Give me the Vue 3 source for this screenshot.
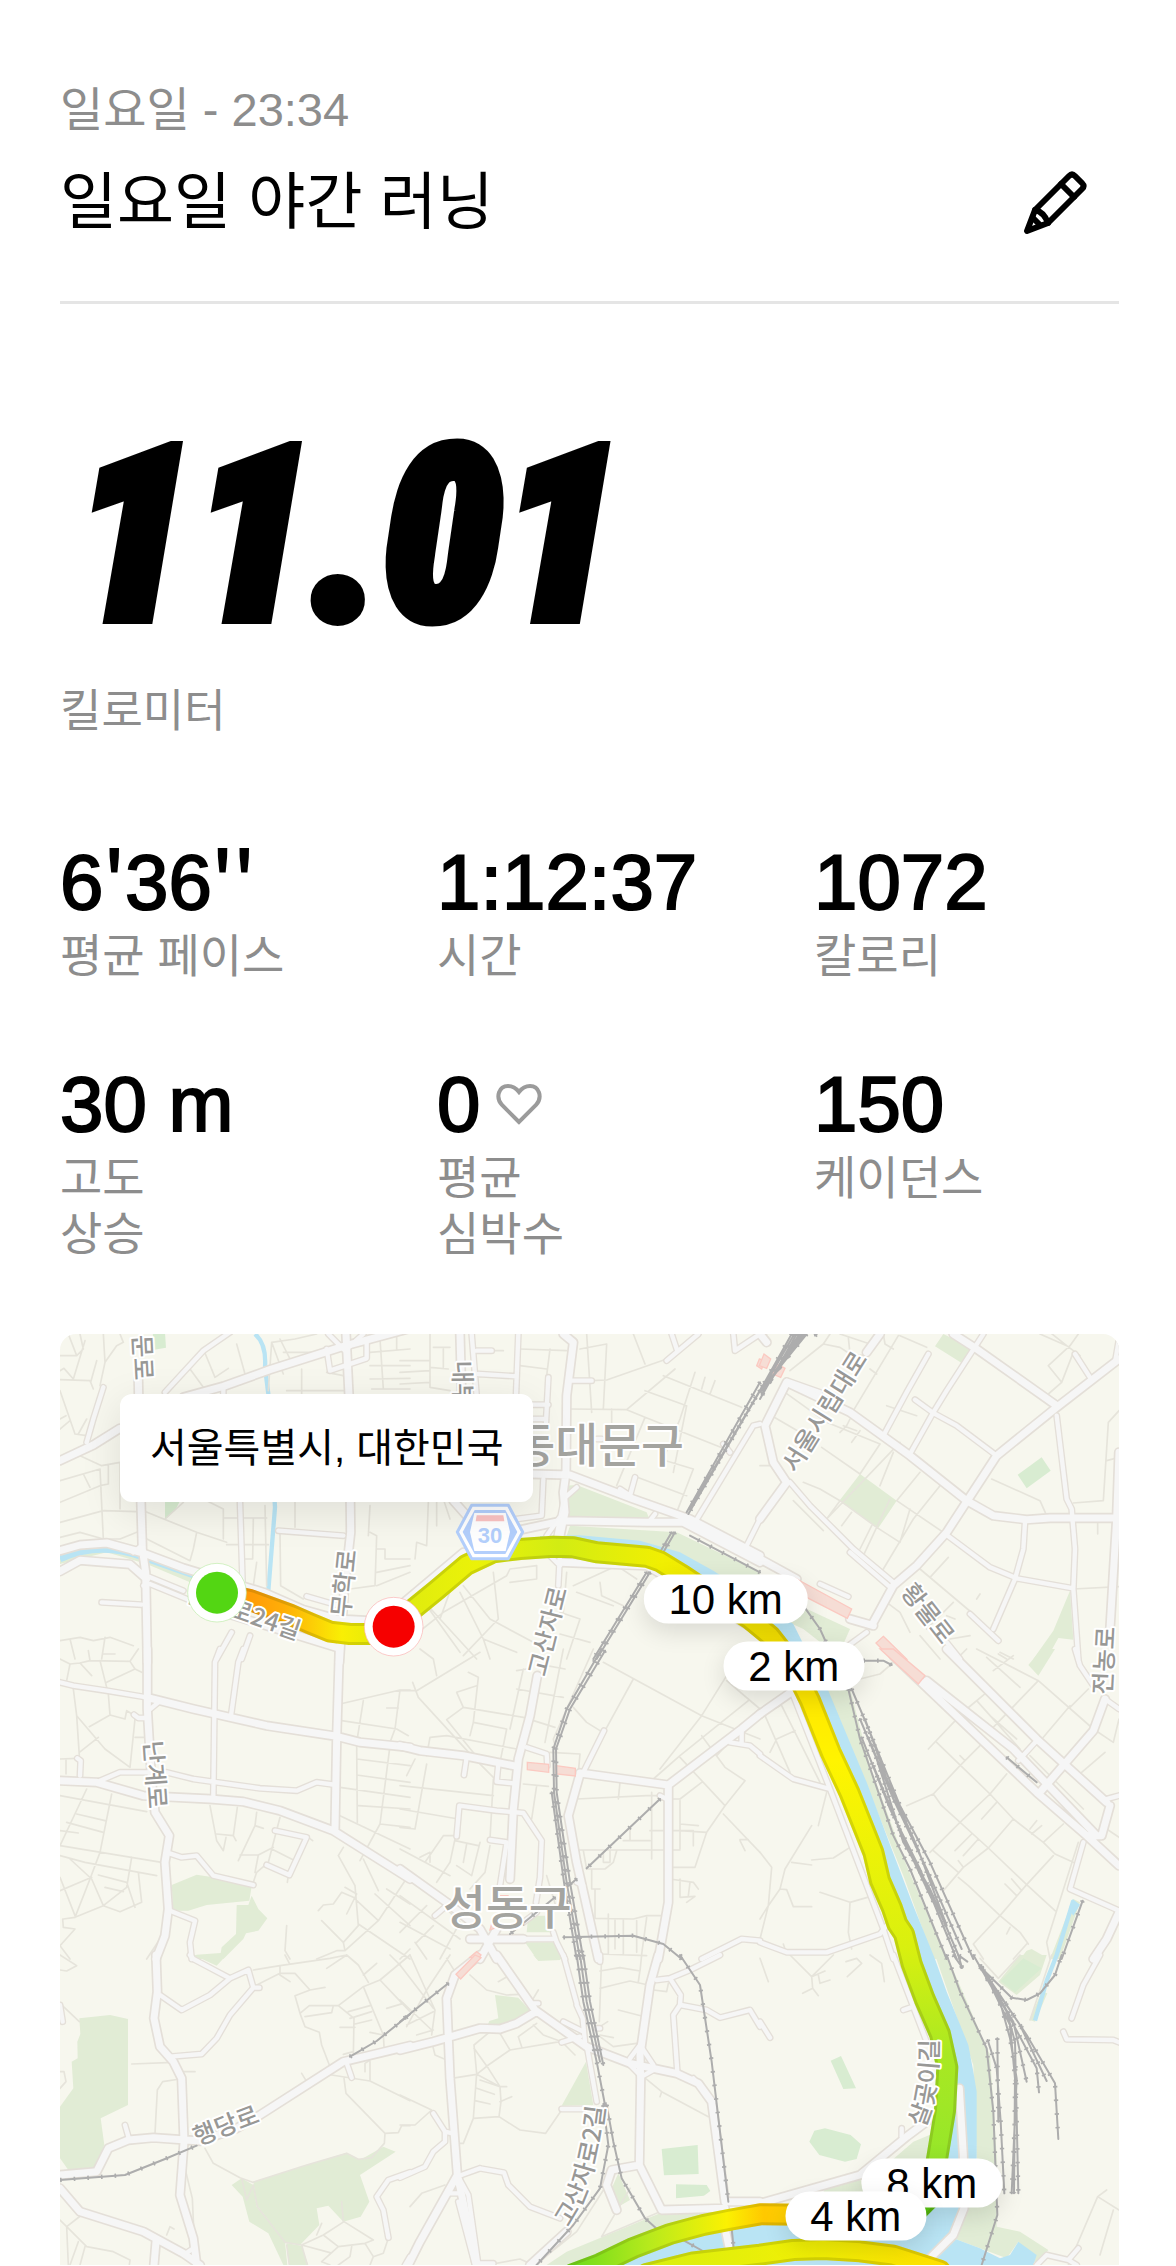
<template>
    <main class="run">
        <header class="run-header">
            <p class="run-date">일요일 - 23:34</p>
            <div class="title-row">
                <h1>일요일 야간 러닝</h1>
                <button class="edit-button" type="button" aria-label="이름 편집">
                    <svg viewBox="0 0 64 64" fill="none" stroke="currentColor" stroke-width="6" stroke-linejoin="round" stroke-linecap="round">
                        <path d="M4 60 L12 39 L46 5 Q49 2 52 5 L59 12 Q62 15 59 18 L25 52 Z" />
                        <path d="M38 13 L51 26 M12 39 Q21 41 25 52 M10 47 L17 54" />
                    </svg>
                </button>
            </div>
        </header>

        <section class="distance">
            <p class="distance-value">11.01</p>
            <p class="distance-unit">킬로미터</p>
        </section>

        <dl class="stats">
            <div v-for="stat in stats" :key="stat.label" class="stat">
                <dd>
                    <span><span v-for="(part, i) in stat.value.split(/(')/)" :key="i" :class="{ tick: part === `'` }">{{ part }}</span></span>
                    <svg v-if="stat.heart" class="heart" viewBox="0 0 46 42" fill="none" stroke="currentColor" stroke-width="4">
                        <path d="M23 39 L6 22 C-1 14 3 3 12 3 C17 3 20 5 23 9 C26 5 29 3 34 3 C43 3 47 14 40 22 Z" />
                    </svg>
                </dd>
                <dt class="label">{{ stat.label }}</dt>
            </div>
        </dl>

        <section class="map">
            <svg class="map-canvas" viewBox="0 0 3177 2793" role="img" aria-label="러닝 경로">
                <defs>
                    <linearGradient id="leg0" gradientUnits="userSpaceOnUse" x1="560" y1="0" x2="1000" y2="0">
                        <stop offset="0" stop-color="#ff9a08" />
                        <stop offset=".25" stop-color="#ffae08" />
                        <stop offset=".65" stop-color="#f9ef04" />
                        <stop offset="1" stop-color="#dce90c" />
                    </linearGradient>
                    <linearGradient id="leg1" gradientUnits="userSpaceOnUse" x1="1000" y1="0" x2="2240" y2="0">
                        <stop offset="0" stop-color="#ddea10" />
                        <stop offset=".2" stop-color="#ebf208" />
                        <stop offset=".4" stop-color="#d2ec13" />
                        <stop offset=".65" stop-color="#f1ef02" />
                        <stop offset="1" stop-color="#f5dc00" />
                    </linearGradient>
                    <linearGradient id="leg2" gradientUnits="userSpaceOnUse" x1="0" y1="1040" x2="0" y2="2640">
                        <stop offset="0" stop-color="#ffe500" />
                        <stop offset=".15" stop-color="#fff400" />
                        <stop offset=".5" stop-color="#d9f00f" />
                        <stop offset=".7" stop-color="#a9e822" />
                        <stop offset=".9" stop-color="#96e62a" />
                        <stop offset="1" stop-color="#55cc10" />
                    </linearGradient>
                    <linearGradient id="leg3" gradientUnits="userSpaceOnUse" x1="1550" y1="0" x2="2300" y2="0">
                        <stop offset="0" stop-color="#72dc1c" />
                        <stop offset=".3" stop-color="#b9ea1c" />
                        <stop offset=".6" stop-color="#fbf102" />
                        <stop offset=".75" stop-color="#ffc800" />
                        <stop offset="1" stop-color="#ffdd00" />
                    </linearGradient>
                    <linearGradient id="leg4" gradientUnits="userSpaceOnUse" x1="1750" y1="0" x2="2650" y2="0">
                        <stop offset="0" stop-color="#d8ee10" />
                        <stop offset=".6" stop-color="#f3f004" />
                        <stop offset="1" stop-color="#ffe000" />
                    </linearGradient>
                    <path id="curve-gosan" d="M1524 2680 Q1615 2560 1640 2260" />
                    <path id="curve-salgot" d="M2592 2382 Q2640 2290 2634 2090" />
                </defs>

                <rect width="3177" height="2793" fill="#f7f7ee" />

                <g v-for="(tile, i) in tiles" :key="'area' + i" :transform="shift(tile)">
                    <path :d="tile.green" fill="#e1ecd5" />
                    <path :d="tile.park" fill="#d8ecd1" />
                </g>
                <path :d="river" fill="#b9e4f4" />
                <g fill="none" stroke="#b9e4f4" stroke-width="13">
                    <path d="M585 0 Q620 30 615 100 L625 180 L645 520 L625 770" />
                    <path d="M0 675 Q120 620 250 670 L420 730" stroke-width="20" />
                    <path d="M3040 1700 L2990 1863 L2960 1940 L2925 2060" />
                </g>
                <path d="M3038 1695 L3060 1712 L3040 1745 L3026 1725 Z" fill="#b9e4f4" />

                <g class="lines" stroke="#e6e4db" stroke-width="5">
                    <path v-for="(tile, i) in tiles" :key="'minor' + i" :d="tile.minor" :transform="shift(tile)" />
                </g>
                <g class="lines" stroke="#e4dfd8">
                    <g v-for="(tile, i) in tiles" :key="'case' + i" :transform="shift(tile)">
                        <path :d="tile.mid" stroke-width="21" />
                        <path :d="tile.wide" stroke-width="31" />
                    </g>
                </g>
                <g class="lines" stroke="#f6f6f6">
                    <g v-for="(tile, i) in tiles" :key="'fill' + i" :transform="shift(tile)">
                        <path :d="tile.mid" stroke-width="13" />
                        <path :d="tile.wide" stroke-width="21" />
                    </g>
                </g>
                <g v-for="(tile, i) in tiles" :key="'pink' + i" :transform="shift(tile)">
                    <path :d="tile.pink" fill="#f6ddd5" stroke="#fbc9c1" stroke-width="4" />
                </g>
                <g class="lines" stroke="#adadad">
                    <g v-for="(tile, i) in tiles" :key="'rail' + i" :transform="shift(tile)">
                        <path :d="tile.rail" stroke-width="6" />
                        <path :d="tile.rail" class="sleepers" />
                    </g>
                </g>

                <g class="lines">
                    <g v-for="(leg, i) in legs" :key="'leg' + i">
                        <path :d="leg" :stroke="`url(#leg${i})`" stroke-width="66" />
                        <path :d="leg" stroke="#4c5000" stroke-opacity=".18" stroke-width="66" />
                        <path :d="leg" :stroke="`url(#leg${i})`" stroke-width="48" />
                    </g>
                </g>

                <!-- expressway shield -->
                <g transform="translate(1290 594)">
                    <path d="M-98 0 L-55 -80 H55 L98 0 L55 80 H-55 Z" fill="#fff" stroke="#b3cffc" stroke-width="9" stroke-linejoin="round" />
                    <path d="M-82 0 L-46 -66 H46 L82 0 L46 66 H-46 Z" fill="#b3cffc" />
                    <path d="M-60 0 L-47 -57 H47 L60 0 L47 57 H-47 Z" fill="#fff" />
                    <path d="M-40 -50 H40 L43 -32 H-43 Z" fill="#fbc3c3" />
                    <text class="shield" y="34">30</text>
                </g>

                <g class="road-names">
                    <text v-for="name in roadNames" :key="name.text" :transform="`translate(${name.x} ${name.y}) rotate(${name.angle})`">{{ name.text }}</text>
                    <text><textPath href="#curve-gosan">고산자로2길</textPath></text>
                    <text><textPath href="#curve-salgot">살곶이길</textPath></text>
                </g>
                <g class="district-names">
                    <text x="1357" y="384">동대문구</text>
                    <text x="1149" y="1770">성동구</text>
                </g>

                <circle cx="471" cy="776" r="88" fill="#fff" stroke="#bdeca8" stroke-width="2" />
                <circle cx="471" cy="776" r="63" fill="#53d613" />
                <circle cx="1001" cy="878" r="88" fill="#fff" stroke="#fbb0b0" stroke-width="2" />
                <circle cx="1001" cy="878" r="63" fill="#f60000" />
            </svg>

            <p class="place">서울특별시, 대한민국</p>
            <span
                v-for="pin in pins"
                :key="pin.text"
                class="pin"
                :style="{ left: pin.x / 31.77 + '%', top: pin.y / 27.93 + '%' }"
            >{{ pin.text }}</span>
        </section>
    </main>
</template>

<script setup>
const stats = [
    { value: "6'36''", label: '평균 페이스' },
    { value: '1:12:37', label: '시간' },
    { value: '1072', label: '칼로리' },
    { value: '30 m', label: '고도\n상승' },
    { value: '0', label: '평균\n심박수', heart: true },
    { value: '150', label: '케이던스' },
]

const pins = [
    { text: '10 km', x: 1997, y: 796 },
    { text: '2 km', x: 2201, y: 997 },
    { text: '8 km', x: 2615, y: 2548 },
    { text: '4 km', x: 2387, y: 2645 },
]

const roadNames = [
    { text: '문로', x: 218, y: 4, angle: 87 },
    { text: '내부순환로', x: 1180, y: 80, angle: 89 },
    { text: '난계로24길', x: 374, y: 802, angle: 19 },
    { text: '무학로', x: 868, y: 852, angle: -84 },
    { text: '고산자로', x: 1456, y: 1030, angle: -76 },
    { text: '서울시립대로', x: 2208, y: 420, angle: -58 },
    { text: '황물로', x: 2520, y: 774, angle: 52 },
    { text: '전농로', x: 3154, y: 1083, angle: -87 },
    { text: '난계로', x: 252, y: 1222, angle: 86 },
    { text: '행당로', x: 412, y: 2436, angle: -21 },
]

// pace-coloured pieces of the run, drawn in order
const legs = [
    'M471 776 L570 798 L690 842 L750 868 L810 893 L870 900 L940 900 L1001 878',
    'M1001 878 L1060 825 L1130 768 L1220 692 L1300 655 L1380 645 L1480 638 L1540 640 L1610 655 L1760 668 L1800 682 L1870 725 L1960 785 L2070 855 L2130 905 L2185 975 L2220 1040',
    'M2220 1040 L2250 1100 L2312 1255 L2368 1375 L2440 1555 L2460 1640 L2495 1720 L2512 1770 L2532 1800 L2555 1890 L2594 1995 L2640 2100 L2662 2200 L2655 2330 L2632 2470 L2610 2590 L2560 2640 L2440 2665',
    'M1540 2820 L1620 2790 L1720 2742 L1830 2700 L1930 2673 L2010 2657 L2100 2641 L2220 2642 L2330 2650',
    'M1760 2820 L1900 2785 L2100 2762 L2200 2748 L2290 2745 L2400 2752 L2500 2765 L2640 2810',
]

const river = 'M1440 606 L1560 604 L1740 620 L1860 655 L1960 710 L2100 800 L2200 870 L2260 990 L2305 1070 L2420 1345 L2495 1545 L2560 1715 L2625 1875 L2660 1973 L2725 2133 L2740 2213 L2750 2273 L2750 2473 L2715 2633 L2680 2713 L2760 2743 L2820 2773 L2850 2763 L2875 2723 L2930 2763 L2920 2793 L1660 2793 L1850 2710 L2100 2650 L2520 2660 L2640 2560 L2680 2370 L2670 2200 L2600 2010 L2500 1790 L2380 1480 L2250 1090 L2160 930 L1900 730 L1700 650 L1440 640 Z'

// 3x units, each tile is drawn from its own corner
const tiles = [
    {
        x: -30, y: -45,
        green: 'M30 720 L170 675 L280 705 L430 770 L420 790 L290 735 L170 700 L30 735 Z',
        park: 'M308 40 H345 L348 86 L312 92 Z M345 545 H390 L378 570 L345 602 Z',
        minor: 'M30 110 L80 110 L55 45 M80 110 L100 90 L90 45 M30 155 L42 148 L70 180 L105 65 M30 182 L120 185 L130 210 M140 125 L122 190 M160 45 L165 130 L200 80 L220 70 L210 45 M165 130 L150 200 M30 215 L75 345 L110 350 M30 300 L48 290 M30 330 L60 305 M85 345 L110 300 M90 410 L155 440 L210 430 M30 550 L150 500 L175 495 L175 440 M30 485 L150 450 L160 660 M100 465 L120 505 M210 430 L210 570 M30 610 L160 575 L260 578 M30 655 L90 640 L160 660 L210 660 L260 640 M280 575 L440 640 L530 670 M440 640 L430 690 M280 655 L420 725 L430 690 M420 150 L460 205 M460 90 L495 175 L535 148 M560 75 L585 165 M345 600 L400 550 M470 545 L520 570 L520 660 M520 597 L650 597 M610 600 L608 720 L580 720 M530 677 H655 M645 560 L650 800 M690 640 L692 800 L760 840 M735 550 V625 M960 640 L980 650 L975 800 L900 810 M620 730 L610 800 M655 215 L665 70 L735 60 L800 45 M665 70 L700 165 M700 100 L830 100 M690 60 L730 140 M755 150 V225 M710 215 H880 M830 160 L880 170 M960 100 L1080 90 M960 140 H1080 M960 180 L1080 178 M965 210 H1080 M990 60 L1000 210 M1040 50 V90 M980 690 H1005 V720 H1080 M980 760 L1080 740 M980 800 L1080 760 M30 965 L90 955 L130 965 L180 955 L250 980 M60 960 L75 1020 M165 955 L155 1020 M960 560 L955 650',
        mid: 'M110 370 L130 300 L160 205 M345 220 L460 95 L540 40 M570 550 L578 800 M685 635 L880 650 M155 850 L275 857 M275 680 L250 700 M290 770 L400 815 M280 800 L300 795 L460 860 M545 940 L500 1020 M600 950 L575 1020 M770 832 L860 858 M830 90 L840 155 L950 118 V65 M835 45 L885 95 L940 45 M520 200 V225',
        wide: 'M30 425 L130 378 L210 328 M400 235 L520 202 L660 152 L880 82 L1080 28 M265 180 L270 450 L277 690 L287 760 L292 1030 M888 45 L897 230 L902 640 L882 820 L868 1030 M30 695 L90 678 L170 672 L280 702 L400 747 L640 820 L760 872 L860 900 L960 905 M30 757 L90 724 L240 736 L290 780 M430 850 L520 880 L860 985',
    },
    {
        x: 1020, y: -45,
        green: 'M495 500 L530 498 L740 580 L750 605 L510 605 L490 560 Z M510 620 L830 640 L1080 760 V870 L960 770 L780 690 L660 665 L500 650 Z',
        minor: 'M90 45 V205 L150 215 M0 125 H90 M0 160 L90 155 M90 145 L145 150 M0 195 L90 190 M130 90 V145 M100 85 H150 M230 95 H310 M250 165 L350 170 M360 90 L500 95 M360 140 L440 150 M450 90 L440 170 M560 45 L575 280 M540 90 L620 75 L610 270 M700 45 L735 135 M570 185 L620 183 L800 120 M510 270 L680 272 L825 150 M680 272 L735 295 L1000 400 M735 295 L650 500 M635 270 V330 M790 170 L1025 265 M735 215 L860 260 L820 460 M885 160 L840 300 L790 420 M915 175 L905 210 M945 185 L930 225 M780 420 L880 450 L830 580 M700 470 L860 530 M85 550 L80 680 L50 670 L45 720 M110 550 V620 M130 540 L150 600 M75 850 L120 900 L230 1020 M120 900 L160 790 M80 860 L180 1000 M30 960 L130 880 L320 770 M180 820 L250 960 L350 1000 M190 800 L270 900 L400 970 M280 760 L295 900 L190 1010 M320 770 L330 750 L410 740 L410 780 L330 790 M500 760 L490 880 M520 800 L650 740 L710 780 M600 790 L605 830 L670 860 M530 820 L640 860 M480 880 L540 900 L500 1020 M480 945 L570 970 M250 960 L270 1020',
        mid: 'M215 45 L230 230 M230 95 H275 M235 165 L350 172 M355 45 L348 230 M445 175 L438 310 M392 257 H445 M392 300 H430 M515 185 L575 185 M800 125 L895 45 M830 90 L815 45 M430 480 L425 590 L350 600 M490 550 L470 650 M440 650 L490 580 M750 605 L765 585 M660 510 L690 530 L705 475 M590 360 L605 360 M490 540 L530 505 M1000 45 L1005 95 L1080 45 M970 375 L990 400 M1035 690 L1080 600 M885 610 L1060 320 L1080 315 M480 700 L475 800 M480 740 L430 690',
        wide: 'M180 45 L185 230 M490 45 L520 70 L500 230 L498 460 M395 465 L510 468 L700 540 L870 600 L1080 710 M498 460 L490 520 L495 580 L480 650 M350 635 L490 605 L740 610 L850 610 L1080 730 M0 860 L190 700 M480 730 L740 740 M740 740 L1080 940 M160 545 L200 590',
        rail: 'M1080 190 L860 580 M1080 215 L865 585 M1088 200 L870 570 M825 640 L790 700 M815 640 L780 700 M750 760 L590 1020 M740 760 L580 1020 M1080 760 L870 650',
        pink: 'M1078 120 L1095 125 L1085 150 L1070 140 Z',
    },
    {
        x: 2100, y: -45,
        green: 'M300 465 L410 545 L355 627 L238 545 Z M0 800 L120 860 L270 930 L250 975 L200 985 L130 930 L0 870 Z M930 815 L940 962 L895 957 L860 1020 H820 L880 935 Z M550 45 L640 90 L605 132 L525 82 Z',
        park: 'M845 415 L872 455 L800 508 L773 467 Z',
        minor: 'M0 40 L20 45 M90 155 L190 75 L210 45 M190 75 L240 85 L270 105 L265 55 M240 45 L330 75 M265 55 L270 105 L320 110 M370 45 L375 75 L400 90 M415 50 L280 275 M330 150 L350 165 M420 50 L500 85 M380 260 L470 290 M75 220 L200 310 L360 375 M35 290 L120 340 M185 385 L300 465 M360 375 L300 465 M400 400 L360 500 M420 370 L200 600 M130 490 L180 510 L240 545 L200 600 M480 460 L410 545 M540 500 L460 600 L370 750 M410 545 L550 640 M275 580 L245 620 M335 620 L300 690 M390 540 L310 710 M450 570 L420 670 L350 625 L240 545 M480 750 L640 885 M565 715 L510 775 M580 850 L500 930 M100 545 L190 635 M695 480 L840 545 L860 590 M870 40 L920 80 L960 110 M955 45 L930 80 L865 140 L905 190 L865 225 M905 190 L940 100 M1077 275 L1045 310 L1030 545 L940 552 M1040 425 L1077 415 M940 810 L1077 803 M1013 610 V645 M650 840 L660 825 M840 45 L920 80 M240 340 L260 320 L270 300 M275 370 L300 335 M250 320 L290 335 M0 440 H40 M480 950 L540 1020 M560 890 L585 900 M570 960 L630 950 M720 1000 L760 1020 M380 850 L420 880 L450 940',
        mid: 'M505 105 L440 220 L370 350 M670 45 L560 215 L520 280 L450 405 M465 242 L520 282 L590 320 L710 410 M945 105 L990 175 M1065 130 L1077 60 M890 290 L920 540 L935 570 L945 690 L940 810 L955 1020 M560 648 L690 745 L770 778 L940 808 M795 610 L790 690 L765 780 L700 930 M630 885 L715 965 M90 490 L150 560 L280 690 L400 790 M270 700 L385 800 M180 795 L265 833 M560 970 L600 1020 M265 980 L320 940 M80 185 L180 220',
        wide: 'M0 600 L80 490 L40 430 L15 320 L80 190 L270 280 L450 410 L620 545 L700 590 L800 602 L870 597 L1077 597 M580 45 L650 90 L890 260 M1077 120 L890 265 L710 410 L620 548 L560 640 L470 740 L400 800 L340 910 M320 100 L360 45 M0 720 L110 780 M270 900 L340 920 M1070 600 L1050 930 M1077 400 L1070 600 M0 45 L20 70',
        rail: 'M95 45 L0 215 M110 45 L0 240 M125 45 L10 215 M140 45 L30 180 M103 45 L5 215 M118 45 L5 228 M132 45 L20 200 M130 860 L180 930 L205 985 M165 50 L175 40',
        pink: 'M12 105 L32 120 L20 148 L-2 140 Z M52 135 L75 148 L62 175 L38 165 Z M110 780 L275 870 L262 898 L130 830 Z M370 952 L440 1020 H395 L348 972 Z',
    },
    {
        x: -30, y: 945,
        green: 'M365 708 L440 677 L490 685 L605 712 L598 755 L470 768 L415 785 H370 Z M560 768 L595 768 L605 740 L625 780 L652 808 L625 845 L588 853 L580 870 L530 920 L520 930 H430 L440 917 L512 912 L515 895 L558 855 Z',
        minor: 'M30 30 L60 45 L90 42 L120 35 L240 37 L265 0 M60 45 L50 95 M90 42 L125 80 M115 5 L120 35 M150 35 L170 115 M170 100 L255 60 L275 70 M240 37 L255 60 M160 15 H195 M70 120 L80 200 L88 320 M175 135 L180 198 L225 210 L230 185 L255 200 M118 233 L180 198 M80 200 L165 300 L240 355 L255 210 M88 310 L145 265 M255 265 H285 M30 330 L80 328 M48 330 V375 M30 440 L290 488 M110 420 L30 590 M185 435 L150 610 L120 690 L75 805 M80 495 L165 515 M50 520 L160 550 M30 545 L85 552 M30 590 L335 640 M30 620 L105 640 L320 680 M60 630 L125 690 L160 770 L210 788 L275 760 L265 670 M245 625 L230 715 L160 770 L75 805 L40 810 M145 678 L230 700 L255 775 M165 715 L220 728 M30 685 L75 800 M30 725 L125 685 M38 810 L40 835 L75 840 L30 890 L60 930 M480 470 L500 575 L520 605 L528 565 M500 555 L550 560 L562 475 M550 560 L558 575 M620 490 L615 530 L565 635 M615 530 L640 538 M690 505 L655 640 L620 670 L610 700 M570 618 L625 618 L670 595 M625 618 L615 670 M665 600 L735 635 M775 565 L788 575 M715 680 L712 700 M875 215 L1040 240 L1075 260 M870 165 L1050 123 H1080 M940 155 L920 280 M1050 123 L1035 240 L1020 280 M1010 177 H1045 M920 285 L922 520 M920 330 L1080 350 M1020 290 L990 525 L930 635 M920 378 L1080 400 M870 415 L1080 445 M925 470 L1080 480 M870 500 L1080 600 M990 525 L1080 535 M880 595 L865 620 L915 710 L925 830 L880 880 L885 905 M940 630 L985 725 M885 715 L920 735 L890 795 M805 785 L820 768 L850 765 L875 730 L910 745 L985 815 M815 815 L880 880 M925 825 L1080 930 M975 735 L1080 830 M1010 720 L1080 765 M985 815 L1075 680 M985 815 L885 905 L860 905 L800 930 M710 830 L705 905 L720 930 M290 930 L330 870 M1080 900 L1050 930',
        mid: 'M510 0 L495 40 L490 440 M580 0 L565 40 L543 200 M30 100 L70 110 L170 125 L290 145 M295 185 L325 160 M285 207 L265 207 L252 197 M90 380 L92 335 L82 328 M150 395 L210 370 L350 370 L430 390 L630 418 L740 425 L800 400 L860 408 M350 610 L395 625 L440 620 L490 680 L610 708 M675 545 L770 565 L718 678 L650 648 M360 785 L435 815 L420 880 L425 930',
        wide: 'M868 0 L860 270 L855 540 M292 0 L292 180 L305 400 L315 490 L358 560 L345 640 L355 780 L345 860 L318 930 M290 145 L430 180 L650 230 L860 262 L930 280 L1080 295 M30 395 L140 400 L280 440 L480 450 L580 458 L690 485 L850 545 L1080 690',
    },
    {
        x: 1020, y: 945,
        green: 'M385 800 H435 L450 850 H380 Z M375 880 H470 L490 930 H410 Z',
        minor: 'M60 0 L100 30 L110 80 M0 125 H50 L240 10 M38 100 L55 145 L215 320 L280 385 M205 70 L235 85 L220 220 L210 260 M230 110 L170 130 L190 175 L140 212 L240 335 M190 175 L370 205 L465 235 M220 220 L320 240 M320 240 L300 340 M80 320 L90 265 L140 260 L350 300 M350 120 L490 145 M370 60 L330 240 M350 65 L380 60 M490 0 L435 280 M440 50 L495 60 M580 0 L460 270 L470 310 M610 40 L905 200 L1080 270 M700 90 L615 245 M980 80 L905 200 L780 360 M520 175 L560 220 L600 245 M980 95 L1080 180 M1045 155 L840 320 L760 390 M905 260 L975 355 L1035 395 L975 470 L840 325 M1000 265 L950 320 M450 310 L540 315 L535 370 M530 450 L740 440 L780 440 M660 400 L655 450 M975 470 L920 550 L840 545 M970 495 L1080 610 M840 455 V600 M810 450 H840 L905 400 M840 525 L895 530 M755 430 V630 M750 545 H880 V590 M670 575 H750 M690 540 V575 M530 603 H840 M920 550 L885 655 H810 M1020 575 L1035 605 M1020 572 H1045 M550 605 L560 660 H615 L640 640 L650 605 M610 610 V640 H630 V605 M575 660 V720 H600 M585 720 V808 L700 810 L740 800 H790 M810 690 L880 700 L895 720 M840 690 V745 L885 742 L860 760 M870 700 L865 740 M625 795 V915 M645 810 V900 M670 810 V915 M710 815 V910 M740 805 L725 915 M600 915 L740 920 M370 405 L445 412 M410 410 L395 510 M440 680 L470 780 M0 410 L280 440 M20 380 L45 330 M80 345 L45 540 M0 480 L175 510 M0 535 L45 540 M280 390 L270 570 M0 600 L75 640 L130 560 L165 560 M90 640 V610 L60 625 M165 570 L150 640 L110 700 M165 575 L235 590 M200 585 L190 640 M240 580 L215 680 L170 650 M270 590 L255 670 L210 720 M75 640 L150 680 M0 740 L180 870 M0 820 L150 900 M80 770 L0 850 M130 770 L180 820 L120 930 M45 880 L80 930 M50 880 L100 830',
        mid: 'M200 325 L192 378 M295 345 L290 398 L340 403 M170 562 L178 470 L290 485 L370 492 L425 575 L420 685 L408 760 M270 573 L320 580 M320 580 L300 710 M380 295 L440 315 L442 350 M612 245 L550 370 M780 440 L800 450 M1025 240 L1025 280 M990 280 L1050 290 L1080 315 M105 800 L140 770 M370 820 L410 790 M460 850 L470 880 L495 930 M310 870 L460 870 M905 930 L1025 870 L1080 875 M530 700 L550 710',
        wide: 'M412 80 L390 200 L355 330 L340 480 L330 690 M0 290 L60 305 L190 320 L340 350 M540 372 L805 408 L1025 240 L1080 195 M805 410 V760 L775 930 M540 375 L505 500 L530 640 L555 750 L595 930 M0 660 L140 760 L240 840 L290 930 M210 870 L370 870 M240 930 L290 840',
        rail: 'M605 0 L500 180 L460 300 L462 430 L500 700 L540 930 M615 5 L510 180 L468 300 L470 430 L510 700 L550 930 M455 430 L492 700 L530 930 M780 450 L560 658 M530 690 L500 715 M465 745 L330 855 M490 865 L700 860 L790 885 L845 930',
        pink: 'M382 340 L446 346 V370 L382 362 Z M468 350 L526 358 V381 L468 375 Z M300 740 H326 M275 825 L290 835 L270 843 Z M210 925 L230 908 L243 918 L235 930 Z',
    },
    {
        x: 2100, y: 945,
        green: 'M190 120 H270 L330 350 L440 650 L560 930 H520 L430 680 L300 360 Z M845 0 H885 L835 80 L805 48 Z M940 750 L960 760 L900 930 H870 Z M800 905 L815 900 L850 920 L840 930 H780 Z',
        minor: 'M15 200 L90 370 M0 200 L60 170 M30 310 L50 270 L105 245 M65 170 L180 400 M105 145 L200 400 M200 430 L175 530 M155 530 L75 660 L60 720 L25 770 L0 870 M95 640 L155 648 M60 720 L80 722 L100 773 H155 M0 610 L35 655 L25 770 M270 595 L220 627 L155 633 M180 730 L270 760 L330 743 M270 760 L265 850 L275 900 M0 810 L25 770 M70 885 L75 900 M300 90 L360 75 L400 40 M505 300 L600 200 M530 280 L690 435 L760 510 L850 580 L885 615 L940 640 M440 470 L520 435 L600 350 L660 290 M520 435 L545 470 L685 597 L800 707 L885 785 M600 320 L615 335 M665 510 L710 460 M510 610 L600 520 L690 435 L740 375 M585 605 L635 555 M610 620 L655 570 M520 605 L595 670 M595 635 L610 655 M550 725 L610 655 L685 597 L760 510 M595 685 L625 710 L720 800 L780 850 L805 885 M910 525 L850 580 M810 540 L830 515 M815 555 L845 530 M880 620 L800 707 L720 800 L640 885 L670 930 M735 705 L770 740 M755 690 L785 725 M750 835 L740 855 M800 885 L760 930 M680 25 L780 115 M715 15 L740 30 M700 65 L760 20 M650 0 L835 95 L1000 240 M835 95 L690 245 M680 130 L620 180 M1000 240 L1060 280 L1077 210 M930 170 L850 265 M985 120 L930 175 M965 370 L1035 310 M690 200 L770 270 M650 155 L780 300 M810 320 L880 390 L970 480 M850 300 L1000 440 M1040 540 L1077 565 M600 20 L620 0 M955 580 L860 880 L870 930',
        mid: 'M100 140 L210 420 M0 320 L100 390 L210 420 M0 880 L80 910 L200 910 L360 855 L380 830 M210 420 L370 840 L400 930 M775 335 L830 275 M970 580 L930 720 L1077 785 M945 0 L960 50 L1000 110 M1035 150 L1077 180 M1040 450 L1077 440',
        wide: 'M0 195 L100 125 M400 20 L830 430 L980 560 L1077 650 M500 95 L760 300 L1010 560 M560 0 L680 120 L830 270 L1040 460 M1035 150 L1000 245 L840 430 M1050 470 L1025 560 L985 560 M1077 790 L1040 870 L1000 930',
        rail: 'M265 120 L300 270 L400 560 L450 660 L560 930 M275 120 L330 250 L420 470 L510 640 L640 930 M300 210 L350 330 L430 580 L510 720 L600 930 M305 265 L390 480 L480 660 L590 930 M325 265 L400 450 L500 660 L605 900 M315 210 L380 390 L470 590 L560 830 M340 350 L430 570 L520 760 M310 35 L370 35 L395 48 M968 755 L905 930 M740 325 L830 400',
        pink: 'M360 0 L400 0 L495 80 L475 105 Z',
    },
    {
        x: -30, y: 1863,
        green: 'M88 190 L180 180 L234 192 V450 L152 490 L163 570 L135 640 L55 645 L30 610 V455 L70 400 L65 320 L83 310 L82 260 L91 237 Z M610 680 L890 593 L930 615 L1000 575 L1037 590 L930 660 L958 740 L932 785 L880 800 L835 752 L800 760 L808 810 L750 870 L705 862 L620 750 Z M545 690 L575 670 L610 690 L620 755 L705 860 L712 930 H700 L655 835 L598 800 L578 725 Z M710 865 L755 872 L775 930 H718 Z M430 0 H530 L500 32 Z',
        minor: 'M30 0 L80 32 L50 48 L30 45 M30 350 H42 L48 380 L30 400 M30 145 L88 200 M245 327 L370 322 M315 535 L322 405 L338 380 L390 372 M400 350 H435 M465 580 L490 625 L570 668 L608 682 L770 630 L890 595 L925 613 L965 608 L1003 565 L1005 535 M405 640 L427 730 L432 840 M50 815 L110 875 L190 890 L240 915 L238 930 M50 815 L95 780 M50 815 L55 930 M85 860 L60 930 M105 875 L90 930 M30 795 L50 815 M350 840 L360 815 L372 822 M610 45 L690 32 L840 10 L890 0 M690 32 L690 60 L720 80 M610 95 L690 55 L735 55 L780 105 L825 97 M780 105 L735 122 L750 175 L765 215 L808 232 L815 270 L838 330 M750 175 L778 152 L865 152 L912 190 L910 300 M765 185 L845 173 L850 152 M865 152 L940 95 L990 75 L1080 170 M890 0 L925 30 L955 82 M940 95 L1000 240 L1003 290 M940 60 L980 25 M990 75 L1080 0 M1020 0 L1050 30 M895 170 L960 152 M900 190 L965 170 M915 207 L965 195 M870 217 H915 M960 232 L1000 240 M1010 160 L1060 145 M830 40 L890 0 M755 355 L770 380 M845 360 L960 378 L1080 437 M960 378 V320 M945 350 V325 L960 315 M882 370 L888 415 L1005 535 L1045 533 L1055 512 H1080 M880 298 L910 290 M755 870 L820 840 L882 800 L970 855 L945 865 L865 875 L820 840 M755 870 L840 893 M865 875 L815 920 L840 930 M905 875 L900 905 L865 930 M945 865 L970 905 L960 930 M970 905 L1000 895 L1015 850 M705 0 L718 25 M710 870 L718 930 M755 870 L772 930 M875 740 L880 800 M800 840 L815 805 M575 670 L590 735 L610 690 L622 755 L705 862 L755 870',
        mid: 'M420 0 L430 12 L540 70 L595 45 L610 98 L628 98 M540 70 L480 120 L395 165 L330 120 M610 98 L540 180 L500 250 L455 297 L360 305 M235 545 L225 510 M892 330 L905 368 M1080 652 L1015 675 L980 725 L1000 765 L1015 848 M30 150 L38 200 M400 900 L430 880 M1080 905 L1065 930',
        wide: 'M318 0 L322 110 L312 190 L330 275 L370 320 L395 370 L402 560 L390 720 L430 850 L440 930 M30 660 L140 650 L175 580 L235 555 L310 548 L450 558 L560 520 L630 480 L880 320 L1080 272 M30 700 L90 770 L280 830 L400 895 L450 930 M318 860 L312 930',
        rail: 'M30 675 L225 660 L345 612 L440 572 M900 305 L980 258 L1080 178',
    },
    {
        x: 1020, y: 1863,
        green: 'M285 120 L355 128 L395 172 L350 205 L300 215 L263 210 L268 198 L295 190 Z M558 320 L580 450 L485 452 Z M655 655 L690 735 L655 755 L635 700 Z M440 930 L500 890 L780 775 L960 770 V800 L780 840 L560 930 Z M400 0 H490 L480 15 L415 18 Z',
        park: 'M785 582 L893 570 L896 657 L792 661 Z M828 688 L920 690 L931 708 L912 722 L828 730 Z',
        minor: 'M30 0 L105 165 L95 240 M0 30 L100 160 M45 165 L0 200 M150 0 L80 105 L20 215 M0 135 L95 225 M20 210 L100 170 M50 240 L100 225 M95 260 L105 300 L140 315 M140 10 L165 50 M210 60 L260 105 L320 120 L360 118 M295 80 L330 60 M400 130 L415 105 M222 270 L270 230 L300 235 L330 285 L480 260 M222 270 L230 355 L220 490 L190 565 H165 M222 280 L265 340 L300 395 L303 440 L297 485 L220 490 M155 370 L230 358 L265 330 L330 285 M230 358 L300 395 H320 M240 375 L300 395 M230 400 L283 418 M225 437 L270 447 M300 440 L335 425 M297 485 L360 525 L437 535 L485 465 M365 275 L355 245 L410 205 M480 255 L525 300 M400 210 L430 240 L490 262 M0 420 L95 465 L45 510 H0 M605 0 L598 200 M600 48 L660 38 L720 48 L725 0 M600 100 L640 90 L690 78 L745 90 M720 45 L715 80 M655 165 L725 183 M600 215 L623 200 M600 240 L640 248 M600 245 L640 275 L710 265 M760 105 L800 110 L805 85 M730 365 L785 410 L925 485 M785 410 L780 425 M690 700 L605 845 L780 770 M30 755 L65 715 L135 690 M260 930 L360 912 L400 930 M430 910 L530 830 L620 690',
        mid: 'M530 150 L548 190 L555 260 M490 0 L530 145 M485 262 L540 245 M490 200 L550 230 M400 145 H415 M590 220 H600 M770 75 L810 70 L870 45 L960 0 M810 70 L842 120 L840 150 L820 180 L832 350 M842 150 L920 165 L960 188 L1050 165 L1080 215 M690 310 L720 270 L760 330 M690 330 L725 365 L760 345 M485 462 H550 M100 475 L135 530 L165 537 M135 530 V560 L100 590 L75 635 L0 668 M240 640 L312 653 L325 690 L390 755 L480 790 M170 665 L240 640 M150 700 L175 665 L205 720 L235 930 M145 715 H180 M880 370 L940 440 M560 270 L590 440 M240 925 H280 M600 0 V20 M175 740 L225 930',
        wide: 'M165 60 L140 130 L150 370 L172 660 M165 60 L240 0 M290 0 L405 165 L560 275 L690 325 L830 355 L895 385 L935 440 L975 740 M0 285 L100 260 L240 220 L300 222 L350 205 L400 175 M172 660 L60 860 L25 930 M172 660 L185 720 L230 930 M775 0 L750 90 L720 300 L722 370 L718 630 L785 765 L975 760 M718 630 L635 645 L620 690 L650 765 M975 740 L1080 740 M975 820 L990 890 M500 830 L390 930',
        rail: 'M530 0 L550 140 L590 320 L615 450 M540 0 L560 140 L600 320 M550 0 L570 140 L610 330 M145 85 L0 200 M620 450 L640 560 L665 670 L735 790 L780 830 M610 450 L625 570 L600 700 L520 810 L410 930 M840 0 L900 90 L935 320 L985 740 M840 850 L930 900 M995 820 L1002 890',
        pink: 'M168 58 L225 0 L243 8 L182 72 Z',
    },
    {
        x: 2100, y: 1863,
        green: 'M525 0 H560 L690 300 L710 600 V815 L780 830 L865 885 L830 930 L775 860 L740 910 L580 850 L650 610 L640 330 L560 100 Z M460 560 L580 510 V612 H400 Z M200 690 L300 665 L310 710 L190 712 Z M845 110 L862 115 L825 200 L808 195 Z M780 0 H860 L840 60 L770 120 L715 80 Z',
        park: 'M212 317 L243 303 L288 400 L250 402 Z M195 520 L272 540 L303 568 L290 612 L255 620 L178 600 L148 560 L163 527 Z M790 10 L845 40 L765 112 L722 78 Z',
        minor: 'M0 10 L25 80 M90 0 L155 65 L220 0 M155 65 L195 48 M155 65 L158 100 L175 122 M158 100 L128 115 M175 60 L180 85 L210 75 M258 20 L290 10 L305 25 L262 65 M330 0 L365 25 L373 80 M660 10 L715 70 L780 0 M810 195 L875 0 M1040 705 L1013 725 L925 930 M1013 725 L1077 765 M1060 765 L1020 900 M400 0 L500 260',
        mid: 'M0 200 L30 248 M430 165 L460 155 M425 545 V520 M935 190 L970 90 L1020 0 M910 230 L920 253 L1060 255 L1077 262 M955 880 L925 915 L860 900 L830 930 M925 915 L950 930 M400 0 L500 260',
        wide: 'M0 745 L300 660 L440 545 L500 500 M598 400 L610 600 L612 760 L580 840 L510 910',
        rail: 'M560 0 L600 110 L680 280 L700 470 L712 780 L665 930 M640 0 L720 140 L750 250 L770 370 L755 715 M660 30 L740 170 L765 260 L775 715 M665 35 L750 210 L765 370 L762 715 M660 30 L760 200 L800 380 M665 40 L780 210 L860 378 M670 45 L800 240 L885 385 L895 552 M740 170 L830 340 L837 412 M665 40 L755 128 L800 135 L840 115 L885 60 L905 0 M683 255 L710 340 L722 500 L733 715 M712 250 L715 500 M580 0 L605 35 L595 0 L622 20',
    },
]

const shift = (tile) => `translate(${tile.x} ${tile.y})`
</script>

<style>
body {
    margin: 0;
    background: #ffffff;
}
</style>

<style scoped>
.run {
    padding: 82px 57px 0 60px;
    font-family: "Liberation Sans", "Noto Sans CJK KR", sans-serif;
    color: #000000;
    background: #ffffff;
}

.run p,
.run h1,
.run dl,
.run dd {
    margin: 0;
}

.run-header {
    padding-bottom: 58px;
    border-bottom: 3px solid #e5e5e5;
}

.run-date,
.distance-unit,
.label {
    font-size: 46px;
    line-height: 56px;
    color: #8d8d8d;
}

.run-date {
    font-size: 47px;
}

.distance-unit {
    font-size: 45px;
}

.title-row {
    display: flex;
    align-items: center;
    justify-content: space-between;
    margin-top: 25px;
    padding-right: 32px;
}

h1 {
    font-size: 62px;
    line-height: 80px;
    font-weight: 400;
}

.edit-button {
    display: flex;
    padding: 0;
    border: none;
    background: none;
    color: #000000;
    cursor: pointer;
}

.edit-button svg {
    width: 64px;
    height: 64px;
}

.distance {
    padding-top: 106px;
}

.run .distance-value {
    margin-bottom: 22px;
    padding-left: 14px;
    font-family: "Futura", "Roboto Condensed", "Open Sans", sans-serif;
    font-size: 240px;
    line-height: 252px;
    font-weight: 900;
    font-style: italic;
    -webkit-text-stroke: 12px #000000;
}

.stats {
    display: grid;
    grid-template-columns: repeat(3, 1fr);
    gap: 76px 72px;
    padding-top: 98px;
}

.stat {
    display: flex;
    flex-direction: column;
}

.stat dd {
    display: flex;
    align-items: center;
    gap: 16px;
    margin-bottom: 2px;
    font-size: 78px;
    line-height: 88px;
    -webkit-text-stroke: 2px #000000;
}

.tick {
    font-family: "Noto Sans CJK KR", sans-serif;
    line-height: 0;
}

.stat .label {
    white-space: pre-line;
}

.heart {
    width: 46px;
    height: 42px;
    color: #9b9b9b;
}

.map {
    position: relative;
    margin-top: 72px;
    overflow: hidden;
    border-radius: 16px 16px 0 0;
}

.map-canvas {
    display: block;
    width: 100%;
}

.lines {
    fill: none;
    stroke-linejoin: round;
    stroke-linecap: round;
}

.sleepers {
    stroke-width: 13px;
    stroke-dasharray: 5 36;
    stroke-linecap: butt;
}

.shield {
    font-size: 66px;
    font-weight: 700;
    text-anchor: middle;
    fill: #b3cffc;
}

.road-names text,
.district-names text {
    font-family: "Noto Sans CJK KR", sans-serif;
    fill: #989896;
    stroke: #ffffff;
    stroke-width: 12px;
    stroke-linejoin: round;
    paint-order: stroke;
}

.road-names text {
    font-size: 74px;
    font-weight: 500;
}

.district-names text {
    font-size: 140px;
    font-weight: 500;
    fill: #a4a4a0;
}

.place {
    position: absolute;
    top: 60px;
    left: 60px;
    padding: 30px;
    border-radius: 12px;
    background: #ffffff;
    box-shadow: 0 10px 40px rgba(0, 0, 0, 0.1);
    font-size: 40px;
    line-height: 48px;
}

.pin {
    position: absolute;
    padding: 0 25px;
    border-radius: 25px;
    background: #ffffff;
    box-shadow: 0 8px 24px rgba(0, 0, 0, 0.12);
    font-size: 42px;
    line-height: 49px;
    white-space: nowrap;
    transform: translate(-50%, -50%);
}
</style>
